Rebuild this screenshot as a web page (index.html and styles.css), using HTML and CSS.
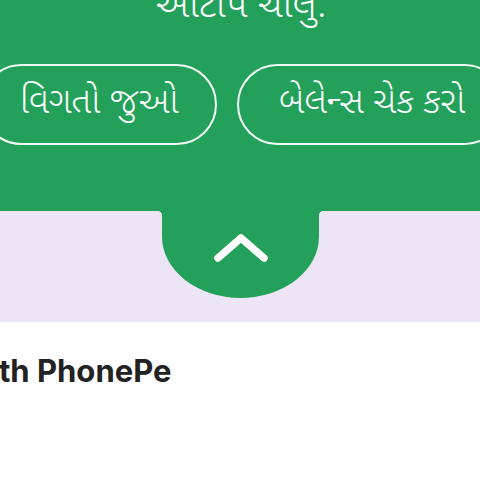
FILE: index.html
```html
<!DOCTYPE html>
<html lang="gu">
<head>
<meta charset="utf-8">
<link rel="stylesheet" href="styles.css">
</head>
<body>
<div class="page">
  <section class="hero">
    <h1 class="title">ઓટોપે ચાલુ.</h1>
    <div class="actions">
      <button class="pill pill-left">વિગતો જુઓ</button>
      <button class="pill pill-right">બેલેન્સ ચેક કરો</button>
    </div>
  </section>
  <section class="band">
    <div class="tab">
      <svg class="chev" width="60" height="40" viewBox="0 0 60 40">
        <path d="M7 29 L30 9 L53 29" fill="none" stroke="#fff" stroke-width="7.5" stroke-linecap="round" stroke-linejoin="round"/>
      </svg>
    </div>
  </section>
  <section class="footer">
    <p class="brand">Pay with PhonePe</p>
  </section>
</div>
</body>
</html>
```
FILE: styles.css
```css
html, body {
  margin: 0;
  padding: 0;
  width: 480px;
  height: 480px;
  overflow: hidden;
  background: #ffffff;
}
.page {
  width: 480px;
  display: flex;
  flex-direction: column;
}
.hero {
  background: #23a15b;
  height: 211px;
  display: flex;
  flex-direction: column;
  overflow: hidden;
}
.title {
  margin: -14px 0 0 0;
  height: 44px;
  text-align: center;
  color: #ffffff;
  font-family: "Noto Sans Gujarati", "Noto Sans", sans-serif;
  font-weight: 300;
  font-size: 39px;
  line-height: 44px;
  padding-left: 2px;
}
.actions {
  display: flex;
  gap: 20px;
  margin-top: 34px;
  margin-left: -19px;
}
.pill {
  flex: none;
  height: 81px;
  border: 2px solid rgba(255, 255, 255, 0.95);
  border-radius: 41px;
  background: transparent;
  color: #ffffff;
  font-family: "Noto Sans Gujarati", "Noto Sans", sans-serif;
  font-weight: 300;
  font-size: 36px;
  padding: 0;
  display: flex;
  align-items: center;
  justify-content: center;
}
.pill-left { width: 236px; }
.pill-right { width: 268px; padding-left: 2px; }
.band {
  background: #ede5f6;
  height: 111px;
  position: relative;
}
.tab {
  position: relative;
  margin-left: 162px;
  width: 157px;
  height: 87px;
  background: #23a15b;
  border-radius: 0 0 79px 79px / 0 0 62px 62px;
  display: flex;
  justify-content: center;
  padding-top: 18px;
  box-sizing: border-box;
}
.tab::before,
.tab::after {
  content: "";
  position: absolute;
  top: 0;
  width: 5px;
  height: 5px;
}
.tab::before {
  left: -5px;
  background: radial-gradient(circle at 0 100%, transparent 5px, #23a15b 5.5px);
}
.tab::after {
  right: -5px;
  background: radial-gradient(circle at 100% 100%, transparent 5px, #23a15b 5.5px);
}
.chev { display: block; }
.footer {
  background: #ffffff;
  padding-top: 30px;
}
.brand {
  margin: 0 0 0 -99px;
  font-family: Inter, Roboto, "Liberation Sans", sans-serif;
  font-weight: 700;
  font-size: 31px;
  color: #222222;
  white-space: nowrap;
}
```
